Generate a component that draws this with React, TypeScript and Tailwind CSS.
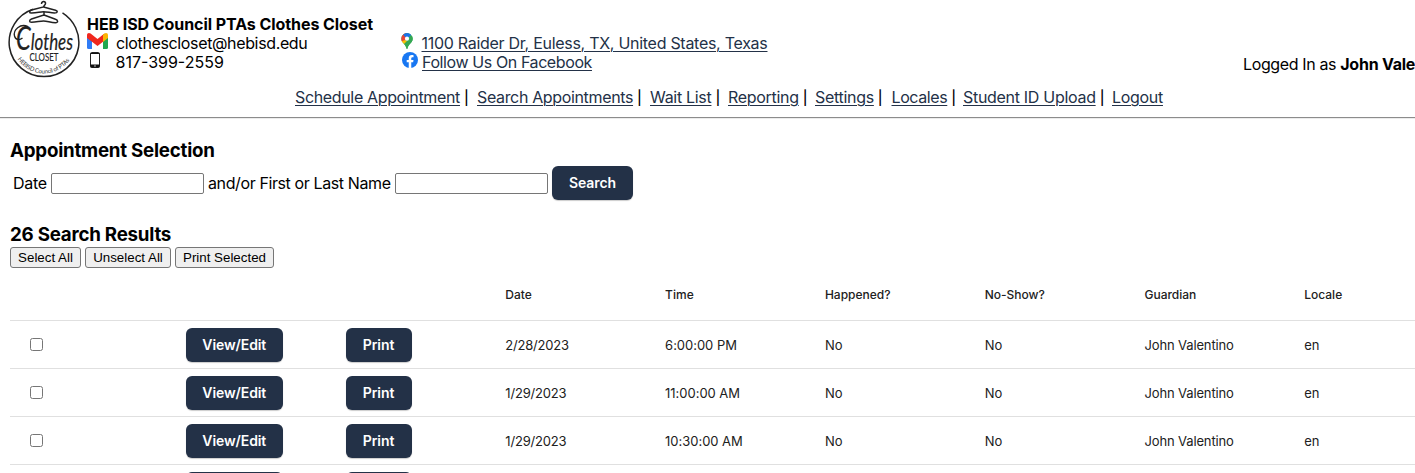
import React from "react";

const nav = [
  { label: "Schedule Appointment", cell: "w-[182px]", track: "tracking-[-0.35px]" },
  { label: "Search Appointments", cell: "w-[173px]", track: "tracking-[-0.35px]" },
  { label: "Wait List", cell: "w-[78px]", track: "tracking-[-0.3px]" },
  { label: "Reporting", cell: "w-[87px]", track: "tracking-[-0.3px]" },
  { label: "Settings", cell: "w-[76.5px]", track: "tracking-[-0.3px]" },
  { label: "Locales", cell: "w-[71.5px]", track: "tracking-[-0.4px]" },
  { label: "Student ID Upload", cell: "w-[149px]", track: "tracking-[-0.3px]" },
  { label: "Logout", cell: "w-[60px]", track: "tracking-[-0.3px]" },
];

const headings = ["", "", "", "Date", "Time", "Happened?", "No-Show?", "Guardian", "Locale"];

const rows = [
  ["2/28/2023", "6:00:00 PM", "No", "No", "John Valentino", "en"],
  ["1/29/2023", "11:00:00 AM", "No", "No", "John Valentino", "en"],
  ["1/29/2023", "10:30:00 AM", "No", "No", "John Valentino", "en"],
  ["1/29/2023", "10:00:00 AM", "No", "No", "John Valentino", "en"],
];

const cellTracking = [
  "tracking-[-0.2px]",
  "tracking-[-0.03px]",
  "",
  "",
  "tracking-[-0.13px]",
  "",
];

function Logo() {
  return (
    <svg className="shrink-0" width="74" height="80" viewBox="0 0 74 80" fill="none" stroke="#222">
      <path d="M26 9.300A35 35 0 0 0 2.500 47.500A35 35 0 0 0 71.500 47.500A35 35 0 0 0 55.500 12.800" strokeWidth="1.500" />
      <path d="M34.500 4c0-3.500 4.500-3 4-.3-.3 1.700-1.500 1.500-2 3.300L24.500 10c-2.500 1-2.500 3 0 3 6 0 8-1.300 12-1.300s7 1.300 11 1.300c3.500 0 3.500-2 1-2.800L36.500 7" strokeWidth="1.500" />
      <path d="M37 12v3L24.500 19c-2.500 1-2.500 3.300 0 3.300 5 0 8-1.300 12-1.300s7 1.700 12 1.700c3 0 2.500-2.700 0-3.500L37 15" strokeWidth="1.500" />
      <path d="M21 26.500C13 23 6 30 7.500 36c1 4 5 4.500 8 2" strokeWidth="1.300" />
      <text x="9" y="50" fill="#222" stroke="#222" strokeWidth=".2" fontFamily="Lato, sans-serif" fontStyle="italic" fontSize="23" textLength="57" lengthAdjust="spacingAndGlyphs"><tspan fontSize="32">C</tspan>lothes</text>
      <text x="22.500" y="60.500" fill="#222" stroke="#222" strokeWidth=".15" fontFamily="Lato, sans-serif" fontSize="11" textLength="29" lengthAdjust="spacingAndGlyphs">CLOSET</text>
      <path id="logo-arc" d="M10.700 58.900A31 31 0 0 0 63.300 58.900" stroke="none" />
      <text fill="#333" stroke="none" fontFamily="Lato, sans-serif" fontSize="6">
        <textPath href="#logo-arc" textLength="61">HEBISD Council of PTAs</textPath>
      </text>
    </svg>
  );
}

function Gmail() {
  return (
    <svg width="21" height="16" viewBox="0 0 21 16">
      <path d="M0 4v10.500Q0 16 1.500 16H5V6z" fill="#2f7cf6" />
      <path d="M21 4v10.500Q21 16 19.500 16H16V6z" fill="#22a650" />
      <path d="M0 5V2.500C0 0 2 -.5 3.600.600L10.500 6 17.400.600 16 8.800l-5.500 4.200L5 8.800z" fill="#f0281e" />
      <path d="M16 1.700v7.300l5-4V2.500C21 0 19-.5 17.400.600z" fill="#fbb404" />
    </svg>
  );
}

function Phone() {
  return (
    <svg width="10" height="16" viewBox="0 0 10 16">
      <rect x=".5" y=".5" width="9" height="15" rx="1.200" fill="#fff" stroke="#222" />
      <path d="M.5 12.500h9V15q0 .6-.8.600H1.300Q.5 15.600.5 15zM.5 1h9v1h-9z" fill="#111" />
      <circle cx="5" cy="14" r=".7" fill="#fff" />
    </svg>
  );
}

function Pin() {
  return (
    <svg width="12" height="16" viewBox="0 0 12 16">
      <clipPath id="pin"><path d="M6 0a5.700 5.700 0 0 1 5.700 5.700C11.700 10 7.200 11 6.500 15.500q-.5 1-1 0C4.800 11 .3 10 .3 5.700A5.700 5.700 0 0 1 6 0" /></clipPath>
      <g clipPath="url(#pin)">
        <path d="M0 0h12v16H0z" fill="#34a853" />
        <path d="M0 0h5L6 5.700 1 9H0z" fill="#ea4335" />
        <path d="M2 1.500 4 0h8L6 6z" fill="#1a73e8" />
        <path d="M12 3 1 13 6 16l6-4z" fill="#34a853" />
        <path d="M0 8.500 4 7l2 1-4 4z" fill="#fbbc04" />
      </g>
      <circle cx="6" cy="5.700" r="2.100" fill="#fff" />
    </svg>
  );
}

function Facebook() {
  return (
    <svg width="16" height="16" viewBox="0 0 16 16">
      <circle cx="8" cy="8" r="8" fill="#1877f2" />
      <path d="M6.750 15.900V10.300H4.700V8h2.050V6.200c0-2 1.200-3.100 3-3.100.9 0 1.800.15 1.800.15v2h-1c-1 0-1.300.6-1.300 1.250V8h2.250l-.35 2.300H9.250v5.600z" fill="#fff" />
    </svg>
  );
}

function DarkButton({ children, className }: { children: React.ReactNode; className: string }) {
  return (
    <button className={`block h-[34px] shrink-0 rounded-[6px] bg-[#233147] text-center text-[14px] font-semibold leading-[34px] tracking-[-0.1px] text-white shadow-[0_1px_1px_rgba(0,0,0,0.2)] ${className}`}>
      {children}
    </button>
  );
}

function PlainButton({ children, className }: { children: React.ReactNode; className: string }) {
  return (
    <button className={`h-[21px] whitespace-nowrap rounded-[3px] border border-[#767676] bg-[#efefef] font-['Liberation_Sans',sans-serif] text-[13.333px] leading-[18px] ${className}`}>
      {children}
    </button>
  );
}

const link = "text-[#233147] underline decoration-1 underline-offset-2";

export default function App() {
  return (
    <div className="h-[473px] w-[1415px] overflow-hidden bg-white font-['Inter',sans-serif] text-[16px] leading-[19px] text-black">
      <header className="h-[118px] border-b border-[#8c8c8c] shadow-[0_1px_0_#ececec]">
        <div className="flex h-[80px] whitespace-nowrap pl-[7px]">
          <Logo />
          <div className="ml-[6px] w-[314px] shrink-0 pt-[15px]">
            <div className="font-bold tracking-[-0.07px]">HEB ISD Council PTAs Clothes Closet</div>
            <div className="flex h-[19px] gap-[8px]">
              <div className="-mt-px"><Gmail /></div>
              <span className="tracking-[-0.36px]">clothescloset@hebisd.edu</span>
            </div>
            <div className="flex h-[19px] pl-[3px]">
              <div className="-mt-px w-[25.500px]"><Phone /></div>
              <span className="tracking-[0px]">817-399-2559</span>
            </div>
          </div>
          <div className="w-[842px] shrink-0 pt-[34px]">
            <div className="flex h-[19px]">
              <div className="-mt-px w-[20.500px]"><Pin /></div>
              <a className={`${link} tracking-[-0.28px]`}>1100 Raider Dr, Euless, TX, United States, Texas</a>
            </div>
            <div className="flex h-[19px]">
              <div className="-mt-px w-[21px] pl-px"><Facebook /></div>
              <a className={`${link} tracking-[-0.4px]`}>Follow Us On Facebook</a>
            </div>
          </div>
          <div className="shrink-0 pt-[55px] tracking-[-0.37px]">
            Logged In as <b className="tracking-[-0.25px]">John Valentino</b>
          </div>
        </div>
        <nav className="flex whitespace-nowrap pl-[295px] pt-[8px]">
          {nav.map((n, i) => (
            <div key={n.label} className={`flex gap-[4px] ${n.cell}`}>
              <a className={`${link} ${n.track}`}>{n.label}</a>
              {i < nav.length - 1 && <span className="text-[14px] font-medium">|</span>}
            </div>
          ))}
        </nav>
      </header>

      <main className="pl-[10px]">
        <h2 className="pt-[21px] text-[18.720px] font-bold leading-[23px] tracking-[-0.22px]">Appointment Selection</h2>
        <div className="mt-[4px] flex h-[34px] items-center whitespace-nowrap pl-[3px]">
          <label className="w-[38px] tracking-[-0.3px]">Date</label>
          <input className="h-[21px] w-[153px] shrink-0 rounded-[2px] border border-[#767676]" />
          <label className="w-[191px] shrink-0 pl-[4px] tracking-[-0.39px]">and/or First or Last Name</label>
          <input className="h-[21px] w-[153px] shrink-0 rounded-[2px] border border-[#767676]" />
          <DarkButton className="ml-[4px] w-[81px]">Search</DarkButton>
        </div>
        <h2 className="pt-[23px] text-[18.720px] font-bold leading-[23px] tracking-[-0.22px]">26 Search Results</h2>
        <div className="mt-px flex h-[21px] gap-[4px]">
          <PlainButton className="w-[71px]">Select All</PlainButton>
          <PlainButton className="w-[86px]">Unselect All</PlainButton>
          <PlainButton className="w-[99px]">Print Selected</PlainButton>
        </div>

        <div className="w-[1438px] text-[13px] text-[#212121]">
          <div className="grid h-[53px] grid-cols-9 items-center border-b border-[#e0e0e0] text-[12px] font-medium">
            {headings.map((h, i) => <div key={i} className="pl-[16px]">{h}</div>)}
          </div>
          {rows.map((r, i) => (
            <div key={i} className="grid h-[48px] grid-cols-9 items-center border-b border-[#e0e0e0]">
              <div className="pl-[20px]">
                <div className="h-[13px] w-[13px] rounded-[2.500px] border border-[#767676]" />
              </div>
              <div className="pl-[16px] pt-px"><DarkButton className="w-[97px]">View/Edit</DarkButton></div>
              <div className="pl-[16px] pt-px"><DarkButton className="w-[66px]">Print</DarkButton></div>
              {r.map((c, j) => <div key={j} className={`pl-[16px] pt-[2px] ${cellTracking[j]}`}>{c}</div>)}
            </div>
          ))}
        </div>
      </main>
    </div>
  );
}
